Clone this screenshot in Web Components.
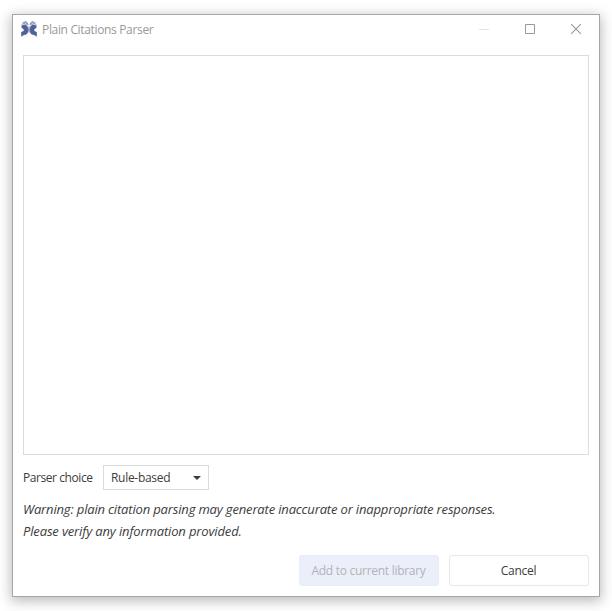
<!DOCTYPE html>
<html lang="en">
<head>
<meta charset="utf-8">
<title>Plain Citations Parser</title>
<style>
html,body{margin:0;height:100%;overflow:hidden;background:#fff}
body{font:12px "Open Sans","Noto Sans",sans-serif;color:#3c3c3c}
</style>
</head>
<body>
<dialog-window>
  <span slot="heading">Plain Citations Parser</span>
  <citation-input></citation-input>
  <choice-field label="Parser choice" value="Rule-based"></choice-field>
  <warning-note><span>Warning: plain citation parsing may generate inaccurate or inappropriate responses.</span><span class="second">Please verify any information provided.</span></warning-note>
  <button-bar>
    <push-button disabled>Add to current library</push-button>
    <push-button>Cancel</push-button>
  </button-bar>
</dialog-window>
<script>
function define(name, markup, setup) {
  const t = document.createElement('template');
  t.innerHTML = markup;
  customElements.define(name, class extends HTMLElement {
    constructor() {
      super();
      this.attachShadow({mode: 'open'}).append(t.content.cloneNode(true));
    }
    connectedCallback() { if (setup) setup(this, this.shadowRoot); }
  });
}

const wing = `<path fill="#50629a" d="M.4 4.6 4 3.6 6.6 5.6 7.4 8.4 6.8 11.8 5.4 13.6 3 14 .2 15.8V11L2.6 9.9 2.8 8.4.6 6.8Z"/>
  <path fill="none" stroke="#7380aa" stroke-width=".9" d="M.6 3.3 3.6 2.5 6.4 4.8M1.8 1.6 4.6 1.7 6.8 4.2M3.6.4 5.8 1.1 7.1 3.6"/>`;
define('app-logo', `<style>:host{display:block;width:16px;height:16px}svg{display:block}</style>
<svg width="16" height="16" viewBox="0 0 16 16"><path fill="#aab3cf" d="M7 5.5h2v6H7z"/><g>${wing}</g><g transform="matrix(-1 0 0 1 16 0)">${wing}</g></svg>`);

define('window-controls', `<style>:host{display:flex;height:30px}span{width:46px;display:grid;place-items:start center}span:last-child{width:45px;margin-right:1px}span:first-child{width:44px;padding-left:2px;margin-right:0}svg{display:block;margin-top:9px}</style>
<span><svg width="10" height="10" viewBox="0 0 10 10"><path d="M0 5.5h10" stroke="#e4e4e4"/></svg></span>
<span><svg width="10" height="10" viewBox="0 0 10 10"><path d="M.5.5h9v9h-9z" fill="none" stroke="#999"/></svg></span>
<span><svg width="10" height="10" viewBox="0 0 10 10"><path d="M0 0 10 10M10 0 0 10" stroke="#999" stroke-width="1.1"/></svg></span>`);

define('title-bar', `<style>:host{display:flex;height:30px;color:#999}
app-logo{margin:6px 5px 0 8px}.t{flex:1;line-height:30px;white-space:nowrap;letter-spacing:-.34px}</style>
<app-logo></app-logo><div class="t"><slot></slot></div><window-controls></window-controls>`);

define('dialog-window', `<style>:host{display:block;padding:14px 12px;box-sizing:border-box;height:611px}
.frame{box-sizing:border-box;width:588px;height:583px;border:1px solid #a6a6a6;background:#fff;display:flex;flex-direction:column;box-shadow:0 3px 12px 1px rgba(0,0,0,.28)}
.body{flex:1;display:flex;flex-direction:column;padding:10px}</style>
<div class="frame"><title-bar><slot name="heading"></slot></title-bar><div class="body"><slot></slot></div></div>`);

define('citation-input', `<style>:host{display:block;height:400px}textarea{display:block;box-sizing:border-box;width:100%;height:100%;border:1px solid #dcdcdc;resize:none;outline:0;background:#fff}</style><textarea></textarea>`);

define('choice-field', `<style>:host{display:flex;height:25px;margin-top:10px;line-height:25px}
.l{width:80px;letter-spacing:-.43px}.c{box-sizing:border-box;width:106px;height:25px;border:1px solid #dcdcdc;display:flex;align-items:center;justify-content:space-between;padding:0 7px;line-height:23px}
.v{letter-spacing:-.3px}svg{display:block}</style>
<div class="l"></div><div class="c"><span class="v"></span><svg width="8" height="4" viewBox="0 0 8 4"><path d="M0 0h8L4 4z" fill="#3c3c3c"/></svg></div>`,
(el, r) => { r.querySelector('.l').textContent = el.getAttribute('label'); r.querySelector('.v').textContent = el.getAttribute('value'); });

define('warning-note', `<style>:host{display:flex;flex-direction:column;align-items:flex-start;height:44px;margin-top:8px;font-style:italic;font-size:13px;line-height:22px;white-space:nowrap}
::slotted(span){letter-spacing:-.16px}::slotted(.second){letter-spacing:-.14px}</style><slot></slot>`);

define('button-bar', `<style>:host{display:flex;justify-content:flex-end;gap:10px;margin-top:auto}</style><slot></slot>`);

define('push-button', `<style>:host{display:block;width:140px;height:31px}
button{box-sizing:border-box;width:100%;height:100%;border:1px solid #e8e8e8;border-radius:3px;background:#fff;color:inherit;font:inherit;letter-spacing:-.28px;padding:0 1px 0 0;line-height:29px;white-space:nowrap}
:host([disabled]) button{background:#ebeffa;border-color:#e7ecf9;color:#b3b3b5}</style><button><slot></slot></button>`);
</script>
</body>
</html>
